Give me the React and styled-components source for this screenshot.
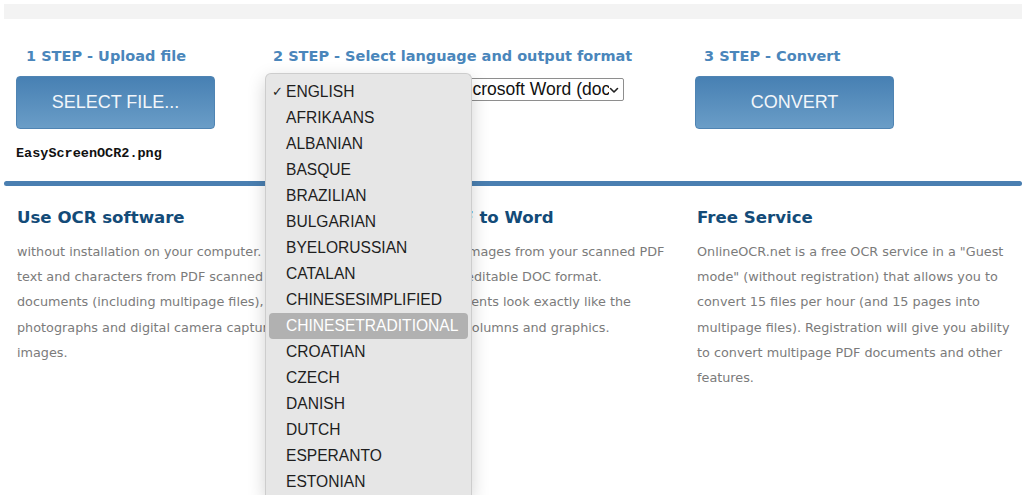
import React from 'react';
import styled, { createGlobalStyle } from 'styled-components';

const GlobalStyle = createGlobalStyle`
  html, body {
    margin: 0;
    padding: 0;
    background: #ffffff;
    height: 495px;
    overflow: hidden;
  }
`;

const languages = [
  'ENGLISH',
  'AFRIKAANS',
  'ALBANIAN',
  'BASQUE',
  'BRAZILIAN',
  'BULGARIAN',
  'BYELORUSSIAN',
  'CATALAN',
  'CHINESESIMPLIFIED',
  'CHINESETRADITIONAL',
  'CROATIAN',
  'CZECH',
  'DANISH',
  'DUTCH',
  'ESPERANTO',
  'ESTONIAN',
];

const infoBlocks = [
  {
    title: 'Use OCR software',
    lines: [
      'without installation on your computer. Fast',
      'text and characters from PDF scanned',
      'documents (including multipage files),',
      'photographs and digital camera captured',
      'images.',
    ],
  },
  {
    title: 'Convert PDF to Word',
    lines: [
      'Extract text and images from your scanned PDF',
      'pictures into the editable DOC format.',
      'Converted documents look exactly like the',
      'original - tables, columns and graphics.',
    ],
  },
  {
    title: 'Free Service',
    lines: [
      'OnlineOCR.net is a free OCR service in a "Guest',
      'mode" (without registration) that allows you to',
      'convert 15 files per hour (and 15 pages into',
      'multipage files). Registration will give you ability',
      'to convert multipage PDF documents and other',
      'features.',
    ],
  },
];

const Page = styled.div`
  position: relative;
  padding: 4px 2px 0 4px;
  font-family: 'DejaVu Sans', Verdana, sans-serif;
`;

const TopBar = styled.div`
  height: 15px;
  background: #f3f3f3;
`;

const Steps = styled.div`
  display: grid;
  grid-template-columns: 249px 430px 1fr;
  padding: 28px 0 0 12px;
`;

const Step = styled.div`
  display: flex;
  flex-direction: column;
`;

const StepTitle = styled.div`
  padding-left: ${p => p.$indent}px;
  font-size: 14.5px;
  line-height: 18px;
  font-weight: bold;
  color: #4a86bb;
  white-space: nowrap;
`;

const BlueButton = styled.div`
  margin-top: 11px;
  width: 197px;
  height: 51px;
  border: 1px solid #4f84b3;
  border-radius: 4px;
  background: linear-gradient(#4780b3, #6a9dc7);
  display: flex;
  align-items: center;
  justify-content: center;
  font-family: 'Liberation Sans', Arial, sans-serif;
  font-size: 18px;
  color: #f2f6fa;
`;

const FileName = styled.div`
  margin-top: 17px;
  font-family: 'Liberation Mono', 'Courier New', monospace;
  font-weight: bold;
  font-size: 13.5px;
  line-height: 16px;
  color: #111;
`;

const SelectRow = styled.div`
  display: flex;
  gap: 8px;
  margin-top: 13px;
  padding-left: 5px;
`;

const SelectBox = styled.div`
  width: ${p => p.$width}px;
  height: 21px;
  border: 1px solid #8e8e8e;
  border-radius: 2px;
  background: #fff;
  display: flex;
  align-items: center;
  padding: 0 4px 0 5px;
  box-sizing: content-box;
  font-family: 'Liberation Sans', Arial, sans-serif;
  font-size: 17.5px;
  color: #111;
`;

const SelectText = styled.span`
  flex: 1;
  overflow: hidden;
  white-space: nowrap;
`;

const Chevron = () => (
  <svg width="10" height="8" viewBox="0 0 10 8">
    <path d="M1.5 2.5 L5 6 L8.5 2.5" fill="none" stroke="#222" strokeWidth="1.6" strokeLinecap="round" strokeLinejoin="round" />
  </svg>
);

const Rule = styled.div`
  margin-top: 19px;
  height: 5px;
  border-radius: 3px;
  background: #4a7fb1;
`;

const Info = styled.div`
  display: grid;
  grid-template-columns: 340px 340px 1fr;
  padding: 21px 0 0 13px;
`;

const InfoTitle = styled.div`
  font-size: 16.6px;
  line-height: 22px;
  font-weight: bold;
  color: #134b78;
  white-space: nowrap;
`;

const InfoText = styled.div`
  margin-top: 10px;
  font-size: 12.8px;
  line-height: 25.2px;
  color: #7b7b7b;
  white-space: nowrap;
`;

const Menu = styled.div`
  position: absolute;
  left: 265px;
  top: 73px;
  width: 205px;
  padding: 5px 0 0 0;
  background: #e6e6e6;
  border: 1px solid #cdcdcd;
  border-bottom: none;
  border-radius: 6px 6px 0 0;
  box-shadow: 0 6px 18px rgba(0, 0, 0, 0.18);
  font-family: 'Liberation Sans', Arial, sans-serif;
  font-size: 15.6px;
  color: #1e1e1e;
`;

const MenuItem = styled.div`
  position: relative;
  height: 26px;
  margin: 0 3px;
  padding-left: 17px;
  border-radius: 4px;
  display: flex;
  align-items: center;
  background: ${p => (p.$active ? '#b1b1b1' : 'transparent')};
  color: ${p => (p.$active ? '#ffffff' : '#1e1e1e')};
`;

const Check = styled.span`
  position: absolute;
  left: 3px;
  top: 6px;
  font-size: 13px;
  line-height: 14px;
`;

export default function App() {
  return (
    <Page>
      <GlobalStyle />
      <TopBar />
      <Steps>
        <Step>
          <StepTitle $indent={10}>1 STEP - Upload file</StepTitle>
          <BlueButton>SELECT FILE...</BlueButton>
          <FileName>EasyScreenOCR2.png</FileName>
        </Step>
        <Step>
          <StepTitle $indent={8}>2 STEP - Select language and output format</StepTitle>
          <SelectRow>
            <SelectBox $width={159}>
              <SelectText>ENGLISH</SelectText>
              <Chevron />
            </SelectBox>
            <SelectBox $width={165}>
              <SelectText>Microsoft Word (docx)</SelectText>
              <Chevron />
            </SelectBox>
          </SelectRow>
        </Step>
        <Step>
          <StepTitle $indent={9}>3 STEP - Convert</StepTitle>
          <BlueButton>CONVERT</BlueButton>
        </Step>
      </Steps>
      <Rule />
      <Info>
        {infoBlocks.map(block => (
          <div key={block.title}>
            <InfoTitle>{block.title}</InfoTitle>
            <InfoText>
              {block.lines.map(line => (
                <div key={line}>{line}</div>
              ))}
            </InfoText>
          </div>
        ))}
      </Info>
      <Menu>
        {languages.map((lang, i) => (
          <MenuItem key={lang} $active={lang === 'CHINESETRADITIONAL'}>
            {i === 0 && <Check>✓</Check>}
            {lang}
          </MenuItem>
        ))}
      </Menu>
    </Page>
  );
}
